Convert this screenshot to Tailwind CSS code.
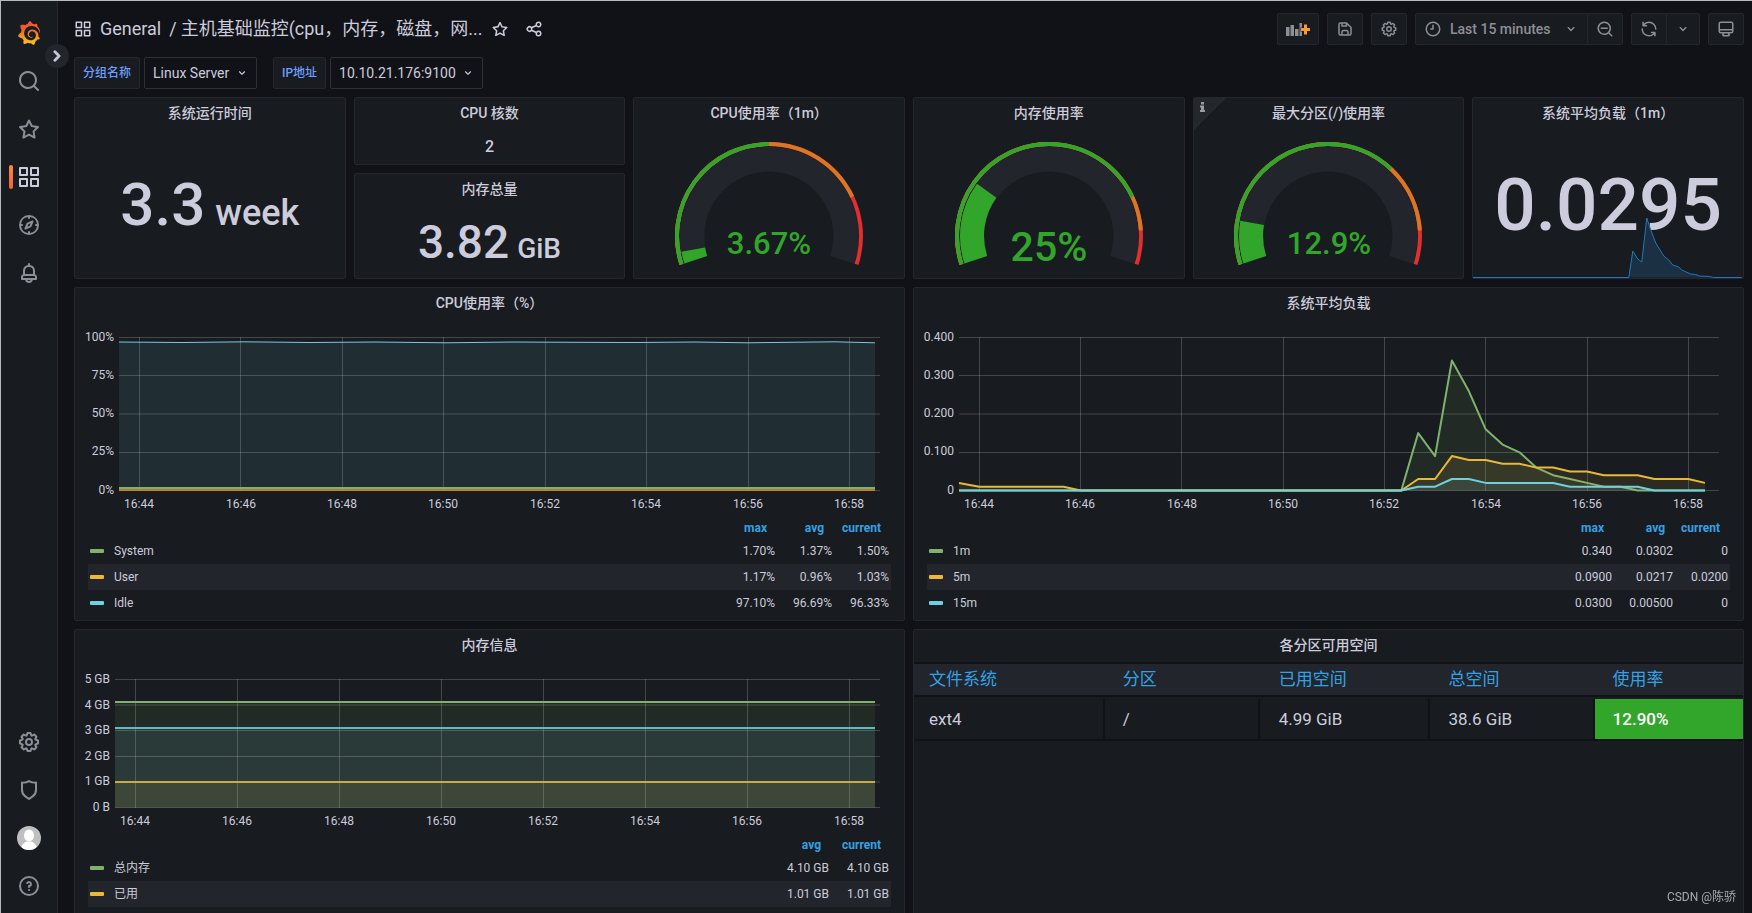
<!DOCTYPE html>
<html lang="zh-CN">
<head>
<meta charset="utf-8">
<title>主机基础监控 - Grafana</title>
<script src="https://cdn.jsdelivr.net/npm/@tailwindcss/browser@4"></script>
</head>
<body class="h-screen overflow-hidden border-t border-l border-[#b4bcba] bg-[#111217] text-[#ccccdc] text-sm font-[Roboto,'Noto_Sans_CJK_SC',sans-serif]">

<svg class="hidden" aria-hidden="true">
  <symbol id="apps" viewBox="0 0 24 24"><path d="M10,13H3a1,1,0,0,0-1,1v7a1,1,0,0,0,1,1h7a1,1,0,0,0,1-1V14A1,1,0,0,0,10,13ZM9,20H4V15H9ZM21,2H14a1,1,0,0,0-1,1v7a1,1,0,0,0,1,1h7a1,1,0,0,0,1-1V3A1,1,0,0,0,21,2ZM20,9H15V4h5Zm1,4H14a1,1,0,0,0-1,1v7a1,1,0,0,0,1,1h7a1,1,0,0,0,1-1V14A1,1,0,0,0,21,13Zm-1,7H15V15h5ZM10,2H3A1,1,0,0,0,2,3v7a1,1,0,0,0,1,1h7a1,1,0,0,0,1-1V3A1,1,0,0,0,10,2ZM9,9H4V4H9Z"/></symbol>
  <symbol id="search" viewBox="0 0 24 24"><path d="M21.71,20.29,18,16.61A9,9,0,1,0,16.61,18l3.68,3.68a1,1,0,0,0,1.42,0A1,1,0,0,0,21.71,20.29ZM11,18a7,7,0,1,1,7-7A7,7,0,0,1,11,18Z"/></symbol>
  <symbol id="zoom-out" viewBox="0 0 24 24"><path d="M21.71,20.29,18,16.61A9,9,0,1,0,16.61,18l3.68,3.68a1,1,0,0,0,1.42,0A1,1,0,0,0,21.71,20.29ZM11,18a7,7,0,1,1,7-7A7,7,0,0,1,11,18Zm4-8H7a1,1,0,0,0,0,2h8a1,1,0,0,0,0-2Z"/></symbol>
  <symbol id="star" viewBox="0 0 24 24"><path d="M22,9.67A1,1,0,0,0,21.14,9l-5.69-.83L12.9,3a1,1,0,0,0-1.8,0L8.55,8.16,2.86,9a1,1,0,0,0-.81.68,1,1,0,0,0,.25,1l4.13,4-1,5.68A1,1,0,0,0,6.9,21.44L12,18.77l5.1,2.67a.93.93,0,0,0,.46.12,1,1,0,0,0,.59-.19,1,1,0,0,0,.4-1l-1-5.68,4.13-4A1,1,0,0,0,22,9.67Zm-6.15,4a1,1,0,0,0-.29.88l.72,4.2-3.76-2a1.06,1.06,0,0,0-.94,0l-3.76,2,.72-4.2a1,1,0,0,0-.29-.88l-3-3,4.21-.61a1,1,0,0,0,.76-.55L12,5.7l1.88,3.82a1,1,0,0,0,.76.55l4.21.61Z"/></symbol>
  <symbol id="compass" viewBox="0 0 24 24"><path d="M12,2A10,10,0,1,0,22,12,10,10,0,0,0,12,2Zm1,17.93V19a1,1,0,0,0-2,0v.93A8,8,0,0,1,4.07,13H5a1,1,0,0,0,0-2H4.07A8,8,0,0,1,11,4.07V5a1,1,0,0,0,2,0V4.07A8,8,0,0,1,19.93,11H19a1,1,0,0,0,0,2h.93A8,8,0,0,1,13,19.93ZM15.14,7.55l-5,2.12a1,1,0,0,0-.52.52l-2.12,5a1,1,0,0,0,.21,1.1,1,1,0,0,0,.7.29.93.93,0,0,0,.4-.09l5-2.12a1,1,0,0,0,.52-.52l2.12-5a1,1,0,0,0-1.31-1.31Zm-2.49,5.1-2.28,1,1-2.28,2.28-1Z"/></symbol>
  <symbol id="bell" viewBox="0 0 24 24"><path d="M18,13.18V10a6,6,0,0,0-5-5.91V3a1,1,0,0,0-2,0V4.09A6,6,0,0,0,6,10v3.18A3,3,0,0,0,4,16v2a1,1,0,0,0,1,1H8.14a4,4,0,0,0,7.72,0H19a1,1,0,0,0,1-1V16A3,3,0,0,0,18,13.18ZM8,10a4,4,0,0,1,8,0v3H8Zm4,10a2,2,0,0,1-1.72-1h3.44A2,2,0,0,1,12,20Zm6-3H6V16a1,1,0,0,1,1-1H17a1,1,0,0,1,1,1Z"/></symbol>
  <symbol id="cog" viewBox="0 0 24 24"><path d="M21.32,9.55l-1.89-.63.89-1.78A1,1,0,0,0,20.13,6L18,3.87a1,1,0,0,0-1.15-.19l-1.78.89-.63-1.89A1,1,0,0,0,13.5,2h-3a1,1,0,0,0-.95.68L8.92,4.57,7.14,3.68A1,1,0,0,0,6,3.87L3.87,6a1,1,0,0,0-.19,1.15l.89,1.78-1.89.63A1,1,0,0,0,2,10.5v3a1,1,0,0,0,.68.95l1.89.63-.89,1.78A1,1,0,0,0,3.87,18L6,20.13a1,1,0,0,0,1.15.19l1.78-.89.63,1.89a1,1,0,0,0,.95.68h3a1,1,0,0,0,.95-.68l.63-1.89,1.78.89A1,1,0,0,0,18,20.13L20.13,18a1,1,0,0,0,.19-1.15l-.89-1.78,1.89-.63A1,1,0,0,0,22,13.5v-3A1,1,0,0,0,21.32,9.55ZM20,12.78l-1.2.4A2,2,0,0,0,17.64,16l.57,1.14-1.1,1.1L16,17.64a2,2,0,0,0-2.79,1.16l-.4,1.2H11.22l-.4-1.2A2,2,0,0,0,8,17.64l-1.14.57-1.1-1.1L6.36,16A2,2,0,0,0,5.2,13.18L4,12.78V11.22l1.2-.4A2,2,0,0,0,6.36,8L5.79,6.89l1.1-1.1L8,6.36A2,2,0,0,0,10.82,5.2l.4-1.2h1.56l.4,1.2A2,2,0,0,0,16,6.36l1.14-.57,1.1,1.1L17.64,8a2,2,0,0,0,1.16,2.79l1.2.4ZM12,8a4,4,0,1,0,4,4A4,4,0,0,0,12,8Zm0,6a2,2,0,1,1,2-2A2,2,0,0,1,12,14Z"/></symbol>
  <symbol id="shield" viewBox="0 0 24 24"><path d="M19.63,3.65a1,1,0,0,0-.84-.2,8,8,0,0,1-6.22-1.27,1,1,0,0,0-1.14,0A8,8,0,0,1,5.21,3.45a1,1,0,0,0-.84.2A1,1,0,0,0,4,4.43v7.45a9,9,0,0,0,3.77,7.33l3.65,2.6a1,1,0,0,0,1.16,0l3.65-2.6A9,9,0,0,0,20,11.88V4.43A1,1,0,0,0,19.63,3.65ZM18,11.88a7,7,0,0,1-2.93,5.7L12,19.77,8.93,17.58A7,7,0,0,1,6,11.88V5.58a10,10,0,0,0,6-1.39,10,10,0,0,0,6,1.39Z"/></symbol>
  <symbol id="help" viewBox="0 0 24 24"><path d="M11.29,15.29a1.58,1.58,0,0,0-.12.15.76.76,0,0,0-.09.18.64.64,0,0,0-.06.18,1.36,1.36,0,0,0,0,.2.84.84,0,0,0,.08.38.9.9,0,0,0,.54.54.94.94,0,0,0,.76,0,.9.9,0,0,0,.54-.54A1,1,0,0,0,13,16a1,1,0,0,0-.29-.71A1,1,0,0,0,11.29,15.29ZM12,2A10,10,0,1,0,22,12,10,10,0,0,0,12,2Zm0,18a8,8,0,1,1,8-8A8,8,0,0,1,12,20ZM12,7A3,3,0,0,0,9.4,8.5a1,1,0,1,0,1.73,1A1,1,0,0,1,12,9a1,1,0,0,1,0,2,1,1,0,0,0-1,1v1a1,1,0,0,0,2,0v-.18A3,3,0,0,0,12,7Z"/></symbol>
  <symbol id="share" viewBox="0 0 24 24"><path d="M18,14a4,4,0,0,0-3.08,1.48l-5.1-2.35a3.64,3.64,0,0,0,0-2.26l5.1-2.35A4,4,0,1,0,14,6a4.17,4.17,0,0,0,.07.71L8.79,9.14a4,4,0,1,0,0,5.72l5.28,2.43A4.17,4.17,0,0,0,14,18a4,4,0,1,0,4-4ZM18,4a2,2,0,1,1-2,2A2,2,0,0,1,18,4ZM6,14a2,2,0,1,1,2-2A2,2,0,0,1,6,14Zm12,6a2,2,0,1,1,2-2A2,2,0,0,1,18,20Z"/></symbol>
  <symbol id="save" viewBox="0 0 24 24"><path d="m20.71 9.29-6-6a1 1 0 0 0-.32-.21A1.09 1.09 0 0 0 14 3H6a3 3 0 0 0-3 3v12a3 3 0 0 0 3 3h12a3 3 0 0 0 3-3v-8a1 1 0 0 0-.29-.71ZM9 5h4v2H9Zm6 14H9v-3a1 1 0 0 1 1-1h4a1 1 0 0 1 1 1Zm4-1a1 1 0 0 1-1 1h-1v-3a3 3 0 0 0-3-3h-4a3 3 0 0 0-3 3v3H6a1 1 0 0 1-1-1V6a1 1 0 0 1 1-1h1v3a1 1 0 0 0 1 1h6a1 1 0 0 0 1-1V6.41l4 4Z"/></symbol>
  <symbol id="clock" viewBox="0 0 24 24"><path d="M12,2A10,10,0,1,0,22,12,10,10,0,0,0,12,2Zm0,18a8,8,0,1,1,8-8A8,8,0,0,1,12,20ZM12,6a1,1,0,0,0-1,1v4H9a1,1,0,0,0,0,2h3a1,1,0,0,0,1-1V7A1,1,0,0,0,12,6Z"/></symbol>
  <symbol id="down" viewBox="0 0 24 24"><path d="M17,9.17a1,1,0,0,0-1.41,0L12,12.71,8.46,9.17a1,1,0,0,0-1.41,0,1,1,0,0,0,0,1.42l4.24,4.24a1,1,0,0,0,1.42,0L17,10.59A1,1,0,0,0,17,9.17Z"/></symbol>
  <symbol id="right" viewBox="0 0 24 24"><path d="M14.83,11.29,10.59,7.05a1,1,0,0,0-1.42,0,1,1,0,0,0,0,1.41L12.71,12,9.17,15.54a1,1,0,0,0,0,1.41,1,1,0,0,0,.71.29,1,1,0,0,0,.71-.29l4.24-4.24A1,1,0,0,0,14.83,11.29Z"/></symbol>
  <symbol id="sync" viewBox="0 0 24 24"><path d="M19.91,15.51H15.38a1,1,0,0,0,0,2h2.4A8,8,0,0,1,4,12a1,1,0,0,0-2,0,10,10,0,0,0,16.88,7.23V21a1,1,0,0,0,2,0V16.5A1,1,0,0,0,19.91,15.51ZM12,2A10,10,0,0,0,5.12,4.77V3a1,1,0,0,0-2,0V7.5a1,1,0,0,0,1,1h4.5a1,1,0,0,0,0-2H6.22A8,8,0,0,1,20,12a1,1,0,0,0,2,0A10,10,0,0,0,12,2Z"/></symbol>
  <symbol id="monitor" viewBox="0 0 24 24"><path d="M19,2H5A3,3,0,0,0,2,5V15a3,3,0,0,0,3,3H7.64l-.58,1a2,2,0,0,0,0,2,2,2,0,0,0,1.75,1h6.46A2,2,0,0,0,17,21a2,2,0,0,0,0-2l-.59-1H19a3,3,0,0,0,3-3V5A3,3,0,0,0,19,2ZM8.77,20,10,18H14l1.2,2ZM20,15a1,1,0,0,1-1,1H5a1,1,0,0,1-1-1V14H20Zm0-3H4V5A1,1,0,0,1,5,4H19a1,1,0,0,1,1,1Z"/></symbol>
</svg>

<div class="flex h-full">
  <!-- Side navigation -->
  <nav class="relative flex w-[57px] shrink-0 flex-col items-center border-r border-[#25272c] bg-[#181b1f] pt-2 pb-[3px] text-[#8e8e99]">
    <a href="#" aria-label="Grafana" class="flex h-12 w-full items-center justify-center">
      <svg class="h-6 w-6" viewBox="0 0 351 365"><defs><linearGradient id="lg" gradientUnits="userSpaceOnUse" x1="175" y1="445" x2="175" y2="114"><stop offset="0" stop-color="#FCEE1F"/><stop offset="1" stop-color="#F15B2A"/></linearGradient></defs><path fill="url(#lg)" d="M342,161.2c-0.6-6.1-1.6-13.1-3.6-20.9c-2-7.7-5-16.2-9.4-25c-4.4-8.8-10.1-17.9-17.5-26.8c-2.9-3.5-6.1-6.9-9.5-10.2c5.1-20.3-6.2-37.9-6.2-37.9c-19.5-1.2-31.9,6.1-36.5,9.4c-0.8-0.3-1.5-0.7-2.3-1c-3.3-1.3-6.7-2.6-10.3-3.7c-3.5-1.1-7.1-2.1-10.8-3c-3.7-0.9-7.4-1.6-11.2-2.2c-0.7-0.1-1.3-0.2-2-0.3c-8.5-27.2-32.9-38.6-32.9-38.6c-27.3,17.3-32.4,41.5-32.4,41.5s-0.1,0.5-0.3,1.4c-1.5,0.4-3,0.9-4.5,1.3c-2.1,0.6-4.2,1.4-6.2,2.2c-2.1,0.8-4.1,1.6-6.2,2.5c-4.1,1.8-8.2,3.8-12.2,6c-3.9,2.2-7.7,4.6-11.4,7.1c-0.5-0.2-1-0.4-1-0.4c-37.8-14.4-71.3,2.9-71.3,2.9c-3.1,40.2,15.1,65.5,18.7,70.1c-0.9,2.5-1.7,5-2.5,7.5c-2.8,9.1-4.9,18.4-6.2,28.1c-0.2,1.4-0.4,2.8-0.5,4.2C18.8,192.7,8.5,228,8.5,228c29.1,33.5,63.1,35.6,63.1,35.6c0,0,0.1-0.1,0.1-0.1c4.3,7.7,9.3,15,14.9,21.9c2.4,2.9,4.8,5.6,7.4,8.3c-10.6,30.4,1.5,55.6,1.5,55.6c32.4,1.2,53.7-14.2,58.2-17.7c3.2,1.1,6.5,2.1,9.8,2.9c10,2.6,20.2,4.1,30.4,4.5c2.5,0.1,5.1,0.2,7.6,0.1l1.2,0l0.8,0l1.6,0l1.6-0.1l0,0.1c15.3,21.8,42.1,24.9,42.1,24.9c19.1-20.1,20.2-40.1,20.2-44.4l0,0c0,0,0-0.1,0-0.3c0-0.4,0-0.6,0-0.6l0,0c0-0.3,0-0.6,0-0.9c4-2.8,7.8-5.8,11.4-9.1c7.6-6.9,14.3-14.8,19.9-23.3c0.5-0.8,1-1.6,1.5-2.4c21.6,1.2,36.9-13.4,36.9-13.4c-3.6-22.5-16.4-33.5-19.1-35.6l0,0c0,0-0.1-0.1-0.3-0.2c-0.2-0.1-0.2-0.2-0.2-0.2c0,0,0,0,0,0c-0.1-0.1-0.3-0.2-0.5-0.3c0.1-1.4,0.2-2.7,0.3-4.1c0.2-2.4,0.2-4.9,0.2-7.3l0-1.8l0-0.9l0-0.5c0-0.6,0-0.4,0-0.6l-0.1-1.5l-0.1-2c0-0.7-0.1-1.3-0.2-1.9c-0.1-0.6-0.1-1.3-0.2-1.9l-0.2-1.9l-0.3-1.9c-0.4-2.5-0.8-4.9-1.4-7.4c-2.3-9.7-6.1-18.9-11-27.2c-5-8.3-11.2-15.6-18.3-21.8c-7-6.2-14.9-11.2-23.1-14.9c-8.3-3.7-16.9-6.1-25.5-7.2c-4.3-0.6-8.6-0.8-12.9-0.7l-1.6,0l-0.4,0c-0.1,0-0.6,0-0.5,0l-0.7,0l-1.6,0.1c-0.6,0-1.2,0.1-1.7,0.1c-2.2,0.2-4.4,0.5-6.5,0.9c-8.6,1.6-16.7,4.7-23.8,9c-7.1,4.3-13.3,9.6-18.3,15.6c-5,6-8.9,12.7-11.6,19.6c-2.7,6.9-4.2,14.1-4.6,21c-0.1,1.7-0.1,3.5-0.1,5.2c0,0.4,0,0.9,0,1.3l0.1,1.4c0.1,0.8,0.1,1.7,0.2,2.5c0.3,3.5,1,6.9,1.9,10.1c1.9,6.5,4.9,12.4,8.6,17.4c3.7,5,8.2,9.1,12.9,12.4c4.7,3.2,9.8,5.5,14.8,7c5,1.5,10,2.1,14.7,2.1c0.6,0,1.2,0,1.7,0c0.3,0,0.6,0,0.9,0c0.3,0,0.6,0,0.9-0.1c0.5,0,1-0.1,1.5-0.1c0.1,0,0.3,0,0.4-0.1l0.5-0.1c0.3,0,0.6-0.1,0.9-0.1c0.6-0.1,1.1-0.2,1.7-0.3c0.6-0.1,1.1-0.2,1.6-0.4c1.1-0.2,2.1-0.6,3.1-0.9c2-0.7,4-1.5,5.7-2.4c1.8-0.9,3.4-2,5-3c0.4-0.3,0.9-0.6,1.3-1c1.6-1.3,1.9-3.7,0.6-5.3c-1.1-1.4-3.1-1.8-4.7-0.9c-0.4,0.2-0.8,0.4-1.2,0.6c-1.4,0.7-2.8,1.3-4.3,1.8c-1.5,0.5-3.1,0.9-4.7,1.2c-0.8,0.1-1.6,0.2-2.5,0.3c-0.4,0-0.8,0.1-1.3,0.1c-0.4,0-0.9,0-1.2,0c-0.4,0-0.8,0-1.2,0c-0.5,0-1,0-1.5-0.1c0,0-0.3,0-0.1,0l-0.2,0l-0.3,0c-0.2,0-0.5,0-0.7-0.1c-0.5-0.1-0.9-0.1-1.4-0.2c-3.7-0.5-7.4-1.6-10.9-3.2c-3.6-1.6-7-3.8-10.1-6.6c-3.1-2.8-5.8-6.1-7.9-9.9c-2.1-3.8-3.6-8-4.3-12.4c-0.3-2.2-0.5-4.5-0.4-6.7c0-0.6,0.1-1.2,0.1-1.8c0,0.2,0-0.1,0-0.1l0-0.2l0-0.5c0-0.3,0.1-0.6,0.1-0.9c0.1-1.2,0.3-2.4,0.5-3.6c1.7-9.6,6.5-19,13.9-26.1c1.9-1.8,3.9-3.4,6-4.9c2.1-1.5,4.4-2.8,6.8-3.9c2.4-1.1,4.8-2,7.4-2.7c2.5-0.7,5.1-1.1,7.8-1.4c1.3-0.1,2.6-0.2,4-0.2c0.4,0,0.6,0,0.9,0l1.1,0l0.7,0c0.3,0,0,0,0.1,0l0.3,0l1.1,0.1c2.9,0.2,5.7,0.6,8.5,1.3c5.6,1.2,11.1,3.3,16.2,6.1c10.2,5.7,18.9,14.5,24.2,25.1c2.7,5.3,4.6,11,5.5,16.9c0.2,1.5,0.4,3,0.5,4.5l0.1,1.1l0.1,1.1c0,0.4,0,0.8,0,1.1c0,0.4,0,0.8,0,1.1l0,1l0,1.1c0,0.7-0.1,1.9-0.1,2.6c-0.1,1.6-0.3,3.3-0.5,4.9c-0.2,1.6-0.5,3.2-0.8,4.8c-0.3,1.6-0.7,3.2-1.1,4.7c-0.8,3.1-1.8,6.2-3,9.3c-2.4,6-5.6,11.8-9.4,17.1c-7.7,10.6-18.2,19.2-30.2,24.7c-6,2.7-12.3,4.7-18.8,5.7c-3.2,0.6-6.5,0.9-9.8,1l-0.6,0l-0.5,0l-1.1,0l-1.6,0l-0.8,0c0.4,0-0.1,0-0.1,0l-0.3,0c-1.8,0-3.5-0.1-5.3-0.3c-7-0.5-13.9-1.8-20.7-3.7c-6.7-1.9-13.2-4.6-19.4-7.8c-12.3-6.6-23.4-15.6-32-26.5c-4.3-5.4-8.1-11.3-11.2-17.4c-3.1-6.1-5.6-12.6-7.4-19.1c-1.8-6.6-2.9-13.3-3.4-20.1l-0.1-1.3l0-0.3l0-0.3l0-0.6l0-1.1l0-0.3l0-0.4l0-0.8l0-1.6l0-0.3c0,0,0,0.1,0-0.1l0-0.6c0-0.8,0-1.7,0-2.5c0.1-3.3,0.4-6.8,0.8-10.2c0.4-3.4,1-6.9,1.7-10.3c0.7-3.4,1.5-6.8,2.5-10.2c1.9-6.7,4.3-13.2,7.1-19.3c5.7-12.2,13.1-23.1,22-31.8c2.2-2.2,4.5-4.2,6.9-6.2c2.4-1.9,4.9-3.7,7.5-5.4c2.5-1.7,5.2-3.2,7.9-4.6c1.3-0.7,2.7-1.4,4.1-2c0.7-0.3,1.4-0.6,2.1-0.9c0.7-0.3,1.4-0.6,2.1-0.9c2.8-1.2,5.7-2.2,8.7-3.1c0.7-0.2,1.5-0.4,2.2-0.7c0.7-0.2,1.5-0.4,2.2-0.6c1.5-0.4,3-0.8,4.5-1.1c0.7-0.2,1.5-0.3,2.3-0.5c0.8-0.2,1.5-0.3,2.3-0.5c0.8-0.1,1.5-0.3,2.3-0.4l1.1-0.2l1.2-0.2c0.8-0.1,1.5-0.2,2.3-0.3c0.9-0.1,1.7-0.2,2.6-0.3c0.7-0.1,1.9-0.2,2.6-0.3c0.5-0.1,1.1-0.1,1.6-0.2l1.1-0.1l0.5-0.1l0.6,0c0.9-0.1,1.7-0.1,2.6-0.2l1.3-0.1c0,0,0.5,0,0.1,0l0.3,0l0.6,0c0.7,0,1.5-0.1,2.2-0.1c2.9-0.1,5.9-0.1,8.8,0c5.8,0.2,11.5,0.9,17,1.9c11.1,2.1,21.5,5.6,31,10.3c9.5,4.6,17.9,10.3,25.3,16.5c0.5,0.4,0.9,0.8,1.4,1.2c0.4,0.4,0.9,0.8,1.3,1.2c0.9,0.8,1.7,1.6,2.6,2.4c0.9,0.8,1.7,1.6,2.5,2.4c0.8,0.8,1.6,1.6,2.4,2.5c3.1,3.3,6,6.6,8.6,10c5.2,6.7,9.4,13.5,12.7,19.9c0.2,0.4,0.4,0.8,0.6,1.2c0.2,0.4,0.4,0.8,0.6,1.2c0.4,0.8,0.8,1.6,1.1,2.4c0.4,0.8,0.7,1.5,1.1,2.3c0.3,0.8,0.7,1.5,1,2.3c1.2,3,2.4,5.9,3.3,8.6c1.5,4.4,2.6,8.3,3.5,11.7c0.3,1.4,1.6,2.3,3,2.1c1.5-0.1,2.6-1.3,2.6-2.8C342.6,170.4,342.5,166.1,342,161.2z"/></svg>
    </a>
    <a href="#" aria-label="Search" class="flex h-12 w-full items-center justify-center"><svg class="size-6 fill-current"><use href="#search"/></svg></a>
    <a href="#" aria-label="Starred" class="flex h-12 w-full items-center justify-center"><svg class="size-6 fill-current"><use href="#star"/></svg></a>
    <a href="#" aria-label="Dashboards" aria-current="page" class="relative flex h-12 w-full items-center justify-center text-[#ccccdc]">
      <span class="absolute top-3 left-2 h-6 w-1 rounded-xs bg-linear-to-b from-[#ff8833] to-[#f55f3e]"></span>
      <svg class="size-6 fill-current"><use href="#apps"/></svg></a>
    <a href="#" aria-label="Explore" class="flex h-12 w-full items-center justify-center"><svg class="size-6 fill-current"><use href="#compass"/></svg></a>
    <a href="#" aria-label="Alerting" class="flex h-12 w-full items-center justify-center"><svg class="size-6 fill-current"><use href="#bell"/></svg></a>
    <div class="grow"></div>
    <a href="#" aria-label="Configuration" class="flex h-12 w-full items-center justify-center"><svg class="size-6 fill-current"><use href="#cog"/></svg></a>
    <a href="#" aria-label="Server Admin" class="flex h-12 w-full items-center justify-center"><svg class="size-6 fill-current"><use href="#shield"/></svg></a>
    <a href="#" aria-label="Profile" class="flex h-12 w-full items-center justify-center">
      <svg class="size-6 rounded-full" viewBox="0 0 24 24"><rect width="24" height="24" fill="#bfbfbf"/><ellipse cx="12" cy="9.5" rx="5" ry="6" fill="#fff"/><path d="M4 24c0-5 2.500-7 5.500-8.500h5C17.500 17 20 19 20 24Z" fill="#fff"/></svg></a>
    <a href="#" aria-label="Help" class="flex h-12 w-full items-center justify-center"><svg class="size-6 fill-current"><use href="#help"/></svg></a>
    <button aria-label="Expand menu" class="absolute top-[43px] -right-3 z-10 flex size-6 items-center justify-center rounded-full bg-[#22252b] text-[#ccccdc]"><svg class="size-6 fill-current stroke-current stroke-[1px]"><use href="#right"/></svg></button>
  </nav>

  <main class="min-w-0 grow overflow-hidden pt-3 pr-2 pl-4">
    <!-- Toolbar -->
    <header class="flex h-8 items-center gap-2 text-[#8e8e99]">
      <svg class="size-[18px] shrink-0 fill-[#ccccdc]"><use href="#apps"/></svg>
      <h1 class="flex text-lg whitespace-nowrap text-[#ccccdc]"><a href="#">General</a><span class="mr-1 ml-2">/</span><a href="#">主机基础监控(cpu，内存，磁盘，网...</a></h1>
      <button aria-label="Mark as favorite" class="text-[#ccccdc]"><svg class="size-[18px] fill-current"><use href="#star"/></svg></button>
      <button aria-label="Share dashboard" class="ml-2 text-[#ccccdc]"><svg class="size-[18px] fill-current"><use href="#share"/></svg></button>
      <div class="grow"></div>
      <button aria-label="Add panel" class="flex h-8 w-[42px] items-center justify-center rounded-xs border border-[#25272c] bg-[#181b1f]">
        <svg class="h-4 w-6" viewBox="0 0 24 16"><path fill="#8e8e99" d="M0 6h3.500v9H0zM4.500 4H8v11H4.500zM9 8h3.500v7H9zM13.500 2H16v13h-2.500z"/><path fill="#181b1f" d="M17.500 3h4.500v3.500h3V10.500h-3V14h-4.500V10.500H14.500v-4h3z"/><path fill="#ff9830" d="M18 3.500h3V7h3v3h-3v3.500h-3V10h-3V7h3z"/></svg></button>
      <button aria-label="Save dashboard" class="flex h-8 w-9 items-center justify-center rounded-xs border border-[#25272c] bg-[#181b1f]"><svg class="size-[18px] fill-current"><use href="#save"/></svg></button>
      <button aria-label="Dashboard settings" class="flex h-8 w-9 items-center justify-center rounded-xs border border-[#25272c] bg-[#181b1f]"><svg class="size-[18px] fill-current"><use href="#cog"/></svg></button>
      <div class="flex">
        <button class="flex h-8 w-[173px] items-center rounded-l-xs border border-[#25272c] bg-[#181b1f] px-2 font-medium"><svg class="mr-2 size-[18px] fill-current"><use href="#clock"/></svg>Last 15 minutes<svg class="ml-auto size-4 fill-current"><use href="#down"/></svg></button>
        <button aria-label="Zoom out" class="flex h-8 w-[35px] items-center justify-center rounded-r-xs border border-l-0 border-[#25272c] bg-[#181b1f]"><svg class="size-[18px] fill-current"><use href="#zoom-out"/></svg></button>
      </div>
      <div class="flex">
        <button aria-label="Refresh" class="flex h-8 w-9 items-center justify-center rounded-l-xs border border-[#25272c] bg-[#181b1f]"><svg class="size-[18px] fill-current"><use href="#sync"/></svg></button>
        <button aria-label="Refresh interval" class="flex h-8 w-[33px] items-center justify-center rounded-r-xs border border-l-0 border-[#25272c] bg-[#181b1f]"><svg class="size-4 fill-current"><use href="#down"/></svg></button>
      </div>
      <button aria-label="Cycle view mode" class="flex h-8 w-9 items-center justify-center rounded-xs border border-[#25272c] bg-[#181b1f]"><svg class="size-[18px] fill-current"><use href="#monitor"/></svg></button>
    </header>

    <!-- Template variables -->
    <div class="mt-3 mb-2 flex gap-4">
      <div class="flex gap-1">
        <label for="group" class="flex h-8 items-center rounded-xs border border-[#25272c] bg-[#181b1f] px-2 text-xs font-medium text-[#6e9fff]">分组名称</label>
        <div class="relative"><select id="group" class="h-8 appearance-none rounded-xs border border-[#2e3036] bg-[#111217] pr-[26px] pl-2 text-sm"><option>Linux Server</option></select><svg class="pointer-events-none absolute top-[9px] right-2 size-[14px] fill-current"><use href="#down"/></svg></div>
      </div>
      <div class="flex gap-1">
        <label for="ip" class="flex h-8 items-center rounded-xs border border-[#25272c] bg-[#181b1f] px-2 text-xs font-medium text-[#6e9fff]">IP地址</label>
        <div class="relative"><select id="ip" class="h-8 appearance-none rounded-xs border border-[#2e3036] bg-[#111217] pr-[26px] pl-2 text-sm"><option>10.10.21.176:9100</option></select><svg class="pointer-events-none absolute top-[9px] right-2 size-[14px] fill-current"><use href="#down"/></svg></div>
      </div>
    </div>

    <!-- Stat and gauge row -->
    <div class="grid grid-cols-6 gap-2">
      <section class="flex h-[182px] flex-col rounded-xs border border-[#25272c] bg-[#181b1f]">
        <h2 class="pt-[5px] text-center text-sm font-medium">系统运行时间</h2>
        <p class="mt-[42px] text-center text-[60px] leading-[80px] font-medium">3.3<span class="ml-[10px] text-[36px]">week</span></p>
      </section>
      <div class="flex flex-col gap-2">
        <section class="h-[68px] rounded-xs border border-[#25272c] bg-[#181b1f]">
          <h2 class="pt-[5px] text-center text-sm font-medium">CPU 核数</h2>
          <p class="mt-3 text-center text-base leading-6 font-medium">2</p>
        </section>
        <section class="h-[106px] rounded-xs border border-[#25272c] bg-[#181b1f]">
          <h2 class="pt-[5px] text-center text-sm font-medium">内存总量</h2>
          <p class="mt-[11px] text-center text-[46px] leading-[64px] font-medium">3.82<span class="ml-2 text-[28px]">GiB</span></p>
        </section>
      </div>
      <section class="h-[182px] rounded-xs border border-[#25272c] bg-[#181b1f]">
        <h2 class="pt-[5px] text-center text-sm font-medium">CPU使用率（1m）</h2>
        <svg class="mx-auto mt-[17px] h-[130px] w-[192px]" viewBox="0 0 192 130" fill="none">
          <path d="M22.770 119.790A77 77 0 1 1 169.230 119.790" stroke="#22252b" stroke-width="25"/>
          <path d="M22.770 119.790A77 77 0 1 1 169.230 119.790" stroke="#32a52b" stroke-width="24" pathLength="100" stroke-dasharray="3.670 200"/>
          <path d="M8.500 124.430A92 92 0 1 1 183.500 124.430" stroke="#e02f2f" stroke-width="4"/>
          <path d="M8.500 124.430A92 92 0 1 1 183.500 124.430" stroke="#db7623" stroke-width="4" pathLength="100" stroke-dasharray="80 200"/>
          <path d="M8.500 124.430A92 92 0 1 1 183.500 124.430" stroke="#32a52b" stroke-width="4" pathLength="100" stroke-dasharray="50 200"/>
          <text x="96" y="114" text-anchor="middle" class="fill-[#32a52b] text-[31px] font-medium">3.67%</text>
        </svg>
      </section>
      <section class="h-[182px] rounded-xs border border-[#25272c] bg-[#181b1f]">
        <h2 class="pt-[5px] text-center text-sm font-medium">内存使用率</h2>
        <svg class="mx-auto mt-[17px] h-[130px] w-[192px]" viewBox="0 0 192 130" fill="none">
          <path d="M22.770 119.790A77 77 0 1 1 169.230 119.790" stroke="#22252b" stroke-width="25"/>
          <path d="M22.770 119.790A77 77 0 1 1 169.230 119.790" stroke="#32a52b" stroke-width="24" pathLength="100" stroke-dasharray="25 200"/>
          <path d="M8.500 124.430A92 92 0 1 1 183.500 124.430" stroke="#e02f2f" stroke-width="4"/>
          <path d="M8.500 124.430A92 92 0 1 1 183.500 124.430" stroke="#db7623" stroke-width="4" pathLength="100" stroke-dasharray="90 200"/>
          <path d="M8.500 124.430A92 92 0 1 1 183.500 124.430" stroke="#32a52b" stroke-width="4" pathLength="100" stroke-dasharray="80 200"/>
          <text x="96" y="121" text-anchor="middle" class="fill-[#32a52b] text-[41px] font-medium">25%</text>
        </svg>
      </section>
      <section class="relative h-[182px] rounded-xs border border-[#25272c] bg-[#181b1f]">
        <svg class="absolute top-0 left-0 size-8" viewBox="0 0 32 32"><path d="M0 0H32L0 32Z" fill="#24282c"/><path d="M7 4h3v2.500H7zM6 7.500h4v4.500h1v2H6v-2h1V9.500H6z" fill="#9a9ba3"/></svg>
        <h2 class="pt-[5px] text-center text-sm font-medium">最大分区(/)使用率</h2>
        <svg class="mx-auto mt-[17px] h-[130px] w-[192px]" viewBox="0 0 192 130" fill="none">
          <path d="M22.770 119.790A77 77 0 1 1 169.230 119.790" stroke="#22252b" stroke-width="25"/>
          <path d="M22.770 119.790A77 77 0 1 1 169.230 119.790" stroke="#32a52b" stroke-width="24" pathLength="100" stroke-dasharray="12.900 200"/>
          <path d="M8.500 124.430A92 92 0 1 1 183.500 124.430" stroke="#e02f2f" stroke-width="4"/>
          <path d="M8.500 124.430A92 92 0 1 1 183.500 124.430" stroke="#db7623" stroke-width="4" pathLength="100" stroke-dasharray="90 200"/>
          <path d="M8.500 124.430A92 92 0 1 1 183.500 124.430" stroke="#32a52b" stroke-width="4" pathLength="100" stroke-dasharray="70 200"/>
          <text x="97" y="114" text-anchor="middle" class="fill-[#32a52b] text-[31px] font-medium">12.9%</text>
        </svg>
      </section>
      <section class="relative h-[182px] rounded-xs border border-[#25272c] bg-[#181b1f]">
        <h2 class="pt-[5px] text-center text-sm font-medium">系统平均负载（1m）</h2>
        <p class="mt-[34px] text-center text-[73px] leading-[96px] font-medium">0.0295</p>
        <svg class="absolute bottom-0 left-0 h-16 w-full" viewBox="0 0 270 64" preserveAspectRatio="none">
          <path d="M0 63.500H156L160 37 165 45 169 48 174 4 178 16 183 29 191 42 196 46 200 51 206 53 209 56 218 60 223 60.500 227 62 237 62.500 241 63.500H269" fill="#1c3044" stroke="#1f78c1" vector-effect="non-scaling-stroke"/>
        </svg>
      </section>
    </div>

    <!-- Graph rows -->
    <div class="mt-2 grid grid-cols-2 gap-2">
      <section class="h-[334px] rounded-xs border border-[#25272c] bg-[#181b1f]">
        <h2 class="pt-[5px] text-center text-sm font-medium">CPU使用率（%）</h2>
        <svg class="mt-[7px] block w-full fill-[#ccccdc] text-xs" viewBox="0 0 829 195">
          <path d="M44 22 107 22.500 170 21.800 235 22.500 300 22 371 22.800 440 22 500 22.300 560 22.500 620 22 672 22.800 740 22 760 21.800 800 22.800V170.500H44Z" fill="#6ed0e0" fill-opacity=".1"/>
          <path d="M44 17.500H805M44 55.500H805M44 94H805M44 132.500H805M44 170.500H805M64.500 17V171M165.500 17V171M267.500 17V171M368.500 17V171M470.500 17V171M571.500 17V171M673.500 17V171M774.500 17V171" stroke="#c8c8c8" stroke-opacity=".25" fill="none"/>
          <path d="M44 22 107 22.500 170 21.800 235 22.500 300 22 371 22.800 440 22 500 22.300 560 22.500 620 22 672 22.800 740 22 760 21.800 800 22.800" fill="none" stroke="#6ed0e0"/>
          <path d="M44 168H800" stroke="#7eb26d" stroke-width="2"/><path d="M44 169.500H800" stroke="#eab839" stroke-opacity=".6"/><path d="M44 170.500H800" stroke="#e0752d"/>
          <g text-anchor="end"><text x="39" y="21">100%</text><text x="39" y="59">75%</text><text x="39" y="97">50%</text><text x="39" y="135">25%</text><text x="39" y="174">0%</text></g>
          <g text-anchor="middle"><text x="64" y="188">16:44</text><text x="166" y="188">16:46</text><text x="267" y="188">16:48</text><text x="368" y="188">16:50</text><text x="470" y="188">16:52</text><text x="571" y="188">16:54</text><text x="673" y="188">16:56</text><text x="774" y="188">16:58</text></g>
        </svg>
        <div class="px-[13px]">
          <table class="mt-[3px] w-full text-right text-xs">
            <thead><tr class="h-[20px] font-bold text-[#33a2e5]"><th></th><th class="w-[57px] pr-[10px]">max</th><th class="w-[57px] pr-[10px]">avg</th><th class="w-[57px] pr-[10px]">current</th></tr></thead>
            <tbody>
              <tr class="h-[26px]"><td><span class="flex items-center gap-[10px] pl-[2px]"><i class="h-1 w-[14px] rounded-[1px] bg-[#7eb26d]"></i>System</span></td><td class="pr-[2px]">1.70%</td><td class="pr-[2px]">1.37%</td><td class="pr-[2px]">1.50%</td></tr>
              <tr class="h-[26px] bg-[#22252b]"><td><span class="flex items-center gap-[10px] pl-[2px]"><i class="h-1 w-[14px] rounded-[1px] bg-[#eab839]"></i>User</span></td><td class="pr-[2px]">1.17%</td><td class="pr-[2px]">0.96%</td><td class="pr-[2px]">1.03%</td></tr>
              <tr class="h-[26px]"><td><span class="flex items-center gap-[10px] pl-[2px]"><i class="h-1 w-[14px] rounded-[1px] bg-[#6ed0e0]"></i>Idle</span></td><td class="pr-[2px]">97.10%</td><td class="pr-[2px]">96.69%</td><td class="pr-[2px]">96.33%</td></tr>
            </tbody>
          </table>
        </div>
      </section>

      <section class="h-[334px] rounded-xs border border-[#25272c] bg-[#181b1f]">
        <h2 class="pt-[5px] text-center text-sm font-medium">系统平均负载</h2>
        <svg class="mt-[7px] block w-full fill-[#ccccdc] text-xs" viewBox="0 0 829 195">
          <path d="M45 17.500H805M45 55.500H805M45 94H805M45 132.500H805M45 170.500H805M65.500 17V171M166.500 17V171M267.500 17V171M369.500 17V171M470.500 17V171M571.500 17V171M673.500 17V171M774.500 17V171" stroke="#c8c8c8" stroke-opacity=".25" fill="none"/>
          <g stroke-width="2" stroke-linejoin="round" fill-opacity=".1">
            <path d="M45 170.500H487.300L504.200 113.100 521.100 136.100 537.900 40.500 554.800 71.100 571.700 109.300 588.600 124.600 605.500 132.300 622.300 147.600 639.200 155.200 656.100 159 673 162.900 689.900 166.700 706.700 166.700 723.600 170.500H791" fill="#7eb26d" stroke="#7eb26d"/>
            <path d="M45 170.500V162.900L65.300 166.700H149.700L166.600 170.500Z" fill="#eab839"/>
            <path d="M487.300 170.500 504.200 159H521.100L537.900 136.100 554.800 139.900H571.700L588.600 143.700H605.500L622.300 147.600H639.200L656.100 151.400H673L689.900 155.200H723.600L740.500 159H774.300L791 162.900V170.500Z" fill="#eab839"/>
            <path d="M45 162.900 65.300 166.700H149.700L166.600 170.500H487.300L504.200 159H521.100L537.900 136.100 554.800 139.900H571.700L588.600 143.700H605.500L622.300 147.600H639.200L656.100 151.400H673L689.900 155.200H723.600L740.500 159H774.300L791 162.900" fill="none" stroke="#eab839"/>
            <path d="M45 170.500H487.300L504.200 166.700H521.100L537.900 159H554.800L571.700 162.900H639.200L656.100 166.700H723.600L740.500 170.500H791" fill="#6ed0e0" stroke="#6ed0e0"/>
          </g>
          <g text-anchor="end"><text x="40" y="21">0.400</text><text x="40" y="59">0.300</text><text x="40" y="97">0.200</text><text x="40" y="135">0.100</text><text x="40" y="174">0</text></g>
          <g text-anchor="middle"><text x="65" y="188">16:44</text><text x="166" y="188">16:46</text><text x="268" y="188">16:48</text><text x="369" y="188">16:50</text><text x="470" y="188">16:52</text><text x="572" y="188">16:54</text><text x="673" y="188">16:56</text><text x="774" y="188">16:58</text></g>
        </svg>
        <div class="px-[13px]">
          <table class="mt-[3px] w-full text-right text-xs">
            <thead><tr class="h-[20px] font-bold text-[#33a2e5]"><th></th><th class="w-[57px] pr-[10px]">max</th><th class="w-[61px] pr-[10px]">avg</th><th class="w-[55px] pr-[10px]">current</th></tr></thead>
            <tbody>
              <tr class="h-[26px]"><td><span class="flex items-center gap-[10px] pl-[2px]"><i class="h-1 w-[14px] rounded-[1px] bg-[#7eb26d]"></i>1m</span></td><td class="pr-[2px]">0.340</td><td class="pr-[2px]">0.0302</td><td class="pr-[2px]">0</td></tr>
              <tr class="h-[26px] bg-[#22252b]"><td><span class="flex items-center gap-[10px] pl-[2px]"><i class="h-1 w-[14px] rounded-[1px] bg-[#eab839]"></i>5m</span></td><td class="pr-[2px]">0.0900</td><td class="pr-[2px]">0.0217</td><td class="pr-[2px]">0.0200</td></tr>
              <tr class="h-[26px]"><td><span class="flex items-center gap-[10px] pl-[2px]"><i class="h-1 w-[14px] rounded-[1px] bg-[#6ed0e0]"></i>15m</span></td><td class="pr-[2px]">0.0300</td><td class="pr-[2px]">0.00500</td><td class="pr-[2px]">0</td></tr>
            </tbody>
          </table>
        </div>
      </section>

      <section class="h-[334px] rounded-xs border border-[#25272c] bg-[#181b1f]">
        <h2 class="pt-[5px] text-center text-sm font-medium">内存信息</h2>
        <svg class="mt-[7px] block w-full fill-[#ccccdc] text-xs" viewBox="0 0 829 170">
          <path d="M40 40.500H800V145.500H40Z" fill="#7eb26d" fill-opacity=".1"/>
          <path d="M40 66H800V145.500H40Z" fill="#6ed0e0" fill-opacity=".1"/>
          <path d="M40 120H800V145.500H40Z" fill="#eab839" fill-opacity=".1"/>
          <path d="M40 17.500H805M40 43H805M40 68.500H805M40 94.500H805M40 120H805M40 145.500H805M60.500 17V146M162.500 17V146M264.500 17V146M366.500 17V146M468.500 17V146M570.500 17V146M672.500 17V146M774.500 17V146" stroke="#c8c8c8" stroke-opacity=".25" fill="none"/>
          <path d="M40 40H800" stroke="#7eb26d" stroke-width="2"/><path d="M40 66H800" stroke="#6ed0e0" stroke-width="2" stroke-opacity=".85"/><path d="M40 120H800" stroke="#eab839" stroke-width="2" stroke-opacity=".85"/>
          <g text-anchor="end"><text x="35" y="21">5 GB</text><text x="35" y="47">4 GB</text><text x="35" y="72">3 GB</text><text x="35" y="98">2 GB</text><text x="35" y="123">1 GB</text><text x="35" y="149">0 B</text></g>
          <g text-anchor="middle"><text x="60" y="163">16:44</text><text x="162" y="163">16:46</text><text x="264" y="163">16:48</text><text x="366" y="163">16:50</text><text x="468" y="163">16:52</text><text x="570" y="163">16:54</text><text x="672" y="163">16:56</text><text x="774" y="163">16:58</text></g>
        </svg>
        <div class="px-[13px]">
          <table class="mt-[3px] w-full text-right text-xs">
            <thead><tr class="h-[20px] font-bold text-[#33a2e5]"><th></th><th class="w-[60px] pr-[10px]">avg</th><th class="w-[60px] pr-[10px]">current</th></tr></thead>
            <tbody>
              <tr class="h-[26px]"><td><span class="flex items-center gap-[10px] pl-[2px]"><i class="h-1 w-[14px] rounded-[1px] bg-[#7eb26d]"></i>总内存</span></td><td class="pr-[2px]">4.10 GB</td><td class="pr-[2px]">4.10 GB</td></tr>
              <tr class="h-[26px] bg-[#22252b]"><td><span class="flex items-center gap-[10px] pl-[2px]"><i class="h-1 w-[14px] rounded-[1px] bg-[#eab839]"></i>已用</span></td><td class="pr-[2px]">1.01 GB</td><td class="pr-[2px]">1.01 GB</td></tr>
            </tbody>
          </table>
        </div>
      </section>

      <section class="h-[334px] rounded-xs border border-[#25272c] bg-[#181b1f]">
        <h2 class="pt-[5px] text-center text-sm font-medium">各分区可用空间</h2>
        <table class="mt-[7px] w-full table-fixed border-collapse text-left text-[17px]">
          <thead><tr class="h-[33px] border-y-2 border-[#111217] bg-[#22252b] text-[#33a2e5]"><th class="w-[23%] pl-[15px] font-normal">文件系统</th><th class="w-[18.700%] pl-[18px] font-normal">分区</th><th class="w-[20.600%] pl-[19px] font-normal">已用空间</th><th class="w-[19.800%] pl-[18px] font-normal">总空间</th><th class="pl-[18px] font-normal">使用率</th></tr></thead>
          <tbody><tr class="border-b-2 border-[#111217]">
            <td class="pt-[2px]"><div class="flex h-10 items-center border-r-2 border-[#111217] pl-[15px]">ext4</div></td>
            <td class="pt-[2px]"><div class="flex h-10 items-center border-r-2 border-[#111217] pl-[18px]">/</div></td>
            <td class="pt-[2px]"><div class="flex h-10 items-center border-r-2 border-[#111217] pl-[19px]">4.99 GiB</div></td>
            <td class="pt-[2px]"><div class="flex h-10 items-center border-r-2 border-[#111217] pl-[18px]">38.6 GiB</div></td>
            <td class="pt-[2px]"><div class="flex h-10 items-center bg-[#32a52b] pl-[18px] font-medium text-white">12.90%</div></td>
          </tr></tbody>
        </table>
      </section>
    </div>
  </main>
</div>
<p class="fixed right-4 bottom-2 text-xs text-[#a9aaae]">CSDN @陈骄</p>
</body>
</html>
